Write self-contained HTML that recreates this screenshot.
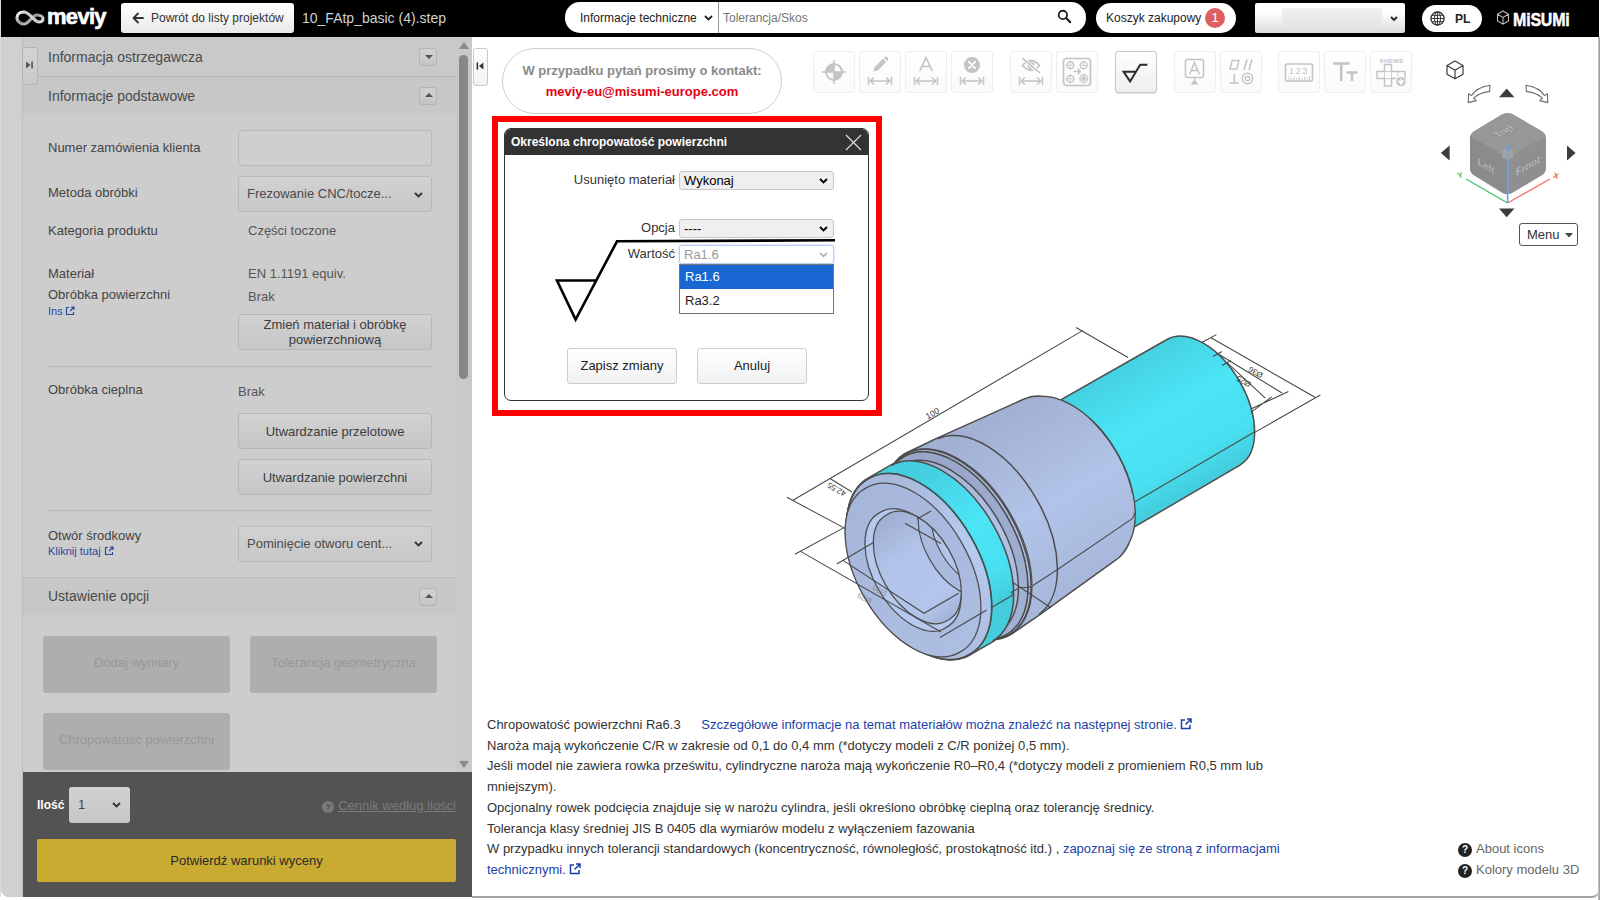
<!DOCTYPE html>
<html lang="pl">
<head>
<meta charset="utf-8">
<title>meviy</title>
<style>
*{box-sizing:border-box;margin:0;padding:0}
html,body{width:1600px;height:900px;overflow:hidden;background:#fff}
body{font-family:"Liberation Sans",Arial,sans-serif;font-size:13px;color:#333;position:relative}
.abs{position:absolute}
#hdr{position:absolute;left:1px;top:0;width:1598px;height:37px;background:#000}
.hbtn{position:absolute;top:3px;height:30px;background:linear-gradient(#fff,#e9e9e9);border-radius:3px;color:#333;font-size:12px;line-height:30px;white-space:nowrap}
.pill{position:absolute;top:3px;height:30px;background:#fff;border-radius:15px;color:#222;font-size:12px;line-height:30px;white-space:nowrap}
/* left panel */
#left{position:absolute;left:1px;top:37px;width:471px;height:860px;background:#cdcdcd;overflow:hidden;border-bottom-left-radius:8px}
#left .strip{position:absolute;left:0;top:0;width:22px;height:860px;background:#d0d0d0;border-right:1px solid #bdbdbd}
.sec{position:absolute;left:22px;width:433px;height:39px;background:#c7c7c7;font-size:14px;color:#4a4a4a;line-height:39px;padding-left:25px}
.sqb{position:absolute;width:18px;height:18px;margin-left:-1px;border:1px solid #b3b3b3;border-radius:3px;background:linear-gradient(#d2d2d2,#c4c4c4)}
.sqb i{position:absolute;left:4.5px;top:6px;width:0;height:0;border-left:4px solid transparent;border-right:4px solid transparent}
.sqb i.dn{border-top:4px solid #555}
.sqb i.up{border-bottom:4px solid #555;top:5px}
.lbl{position:absolute;left:47px;font-size:13px;color:#444;white-space:nowrap;line-height:15px}
.val{position:absolute;font-size:13px;color:#555;white-space:nowrap;line-height:15px}
.lnk{position:absolute;left:47px;font-size:11px;color:#2b4a9b;white-space:nowrap;line-height:12px}
.inp{position:absolute;left:237px;width:194px;height:36px;border:1px solid #b9b9b9;border-radius:3px;background:#cfcfcf}
.selL{position:absolute;left:237px;width:194px;height:36px;border:1px solid #b9b9b9;border-radius:3px;background:linear-gradient(#d1d1d1,#c8c8c8);font-size:13px;color:#4a4a4a;line-height:34px;padding-left:8px;white-space:nowrap}
.btnL{position:absolute;left:237px;width:194px;border:1px solid #b7b7b7;border-radius:3px;background:linear-gradient(#d2d2d2,#c6c6c6);font-size:13px;color:#3c3c3c;text-align:center;white-space:nowrap}
.hr{position:absolute;left:47px;width:384px;height:1px;background:#b8b8b8}
.chev{position:absolute;width:9px;height:6px}
.dis{position:absolute;height:57px;width:187px;background:#aeaeae;border-radius:3px;color:#989898;font-size:13px;text-align:center;line-height:54px;white-space:nowrap}
/* toolbar */
.tb{position:absolute;top:51px;width:42px;height:42px;border:1px solid #eee;border-radius:3px;background:linear-gradient(#fff,#fafafa)}
.tb.act{border-color:#c8c8c8;background:linear-gradient(#fff,#eee);box-shadow:0 1px 1px rgba(0,0,0,.12)}
.tb svg{position:absolute;left:-1px;top:-1px}
/* dialog */
#dlgwrap{position:absolute;left:492px;top:116px;width:390px;height:300px;border:6px solid #fe0000}
#dlg{position:absolute;left:504px;top:128px;width:365px;height:273px;border:1px solid #333;border-radius:7px;background:#fff;overflow:hidden}
#dlg .tt{position:absolute;left:0;top:0;width:100%;height:26px;background:#333;color:#fff;font-weight:bold;font-size:12px;line-height:26px;padding-left:6px}
.dl{position:absolute;font-size:13px;color:#333;white-space:nowrap;text-align:right;line-height:16px}
.dsel{position:absolute;left:174px;width:155px;height:19px;border:1px solid #c6c6c6;border-radius:3px;background:#efefef;font-size:13px;color:#000;line-height:17px;padding-left:4px;white-space:nowrap}
.dbtn{position:absolute;top:219px;width:110px;height:36px;border:1px solid #ccc;border-radius:3px;background:linear-gradient(#fff,#f1f1f1);font-size:13px;color:#222;text-align:center;line-height:33px}
.q{display:inline-block;width:14px;height:14px;border-radius:7px;background:#222;color:#fff;font-size:10px;font-weight:bold;line-height:14px;text-align:center;margin-right:4px;vertical-align:0}
/* notes */
#notes{position:absolute;left:487px;top:715px;width:840px;font-size:13px;line-height:20.7px;color:#333}
#notes a{color:#1b3fa8;text-decoration:none}
</style>
</head>
<body>
<!-- HEADER -->
<div id="hdr">
  <svg class="abs" style="left:14px;top:9px" width="32" height="18" viewBox="0 0 32 18">
    <defs><linearGradient id="lg1" x1="0" y1="0" x2="1" y2="1"><stop offset="0" stop-color="#fff"/><stop offset=".5" stop-color="#9a9a9a"/><stop offset="1" stop-color="#eee"/></linearGradient></defs>
    <path d="M9 3 C4 3 2 6 2 9 C2 12 5 15 9 15 C14 15 17 6 22 6 C26 6 28 8 28 10 C28 12 26 13 24 13 C22 13 21 12 20 11" fill="none" stroke="url(#lg1)" stroke-width="3.2" stroke-linecap="round"/>
    <path d="M9 3 C13 3 15 7 20 11" fill="none" stroke="#cfcfcf" stroke-width="3" stroke-linecap="round"/>
  </svg>
  <div class="abs" style="left:46px;top:3px;color:#fff;font-weight:bold;font-size:22px;line-height:28px;letter-spacing:-.7px;-webkit-text-stroke:.6px #fff">meviy</div>
  <div class="hbtn" style="left:120px;width:173px;padding-left:30px">Powrót do listy projektów
    <svg class="abs" style="left:11px;top:9px" width="12" height="12" viewBox="0 0 12 12"><path d="M11 6H2M6 1.5L1.5 6L6 10.5" fill="none" stroke="#333" stroke-width="1.8" stroke-linecap="round" stroke-linejoin="round"/></svg>
  </div>
  <div class="abs" style="left:301px;top:10px;color:#d0d0d0;font-size:14px;line-height:16px;white-space:nowrap">10_FAtp_basic (4).step</div>
  <!-- search -->
  <div class="pill" style="left:564px;top:2px;height:31px;width:521px;line-height:33px">
    <span class="abs" style="left:15px;top:0">Informacje techniczne</span>
    <svg class="abs" style="left:139px;top:13px" width="9" height="6" viewBox="0 0 9 6"><path d="M1 1l3.5 3.5L8 1" fill="none" stroke="#222" stroke-width="1.8"/></svg>
    <span class="abs" style="left:153px;top:0;width:1px;height:31px;background:#999"></span>
    <span class="abs" style="left:158px;top:0;color:#757575">Tolerancja/Skos</span>
    <svg class="abs" style="left:492px;top:7px" width="14.5" height="14.5" viewBox="0 0 16 16"><circle cx="6.5" cy="6.5" r="4.6" fill="none" stroke="#222" stroke-width="2"/><path d="M10 10l4.5 4.5" stroke="#222" stroke-width="2.4" stroke-linecap="round"/></svg>
  </div>
  <div class="pill" style="left:1095px;width:140px;padding-left:10px">Koszyk zakupowy
    <span class="abs" style="left:109px;top:5px;width:20px;height:20px;border-radius:10px;background:#de5f5f;color:#fff;font-size:13px;line-height:20px;text-align:center">1</span>
  </div>
  <div class="hbtn" style="left:1254px;width:150px;background:linear-gradient(#fff 30%,#dcdcdc);border-radius:2px">
    <span class="abs" style="left:27px;top:5px;width:100px;height:20px;background:linear-gradient(#f0f0f0,#e4e4e4)"></span>
    <svg class="abs" style="left:135px;top:13px" width="8" height="6" viewBox="0 0 8 6"><path d="M1 1l3 3 3-3" fill="none" stroke="#222" stroke-width="1.8"/></svg>
  </div>
  <div class="pill" style="left:1421px;top:5px;height:27px;width:60px;font-weight:bold;padding-left:33px;line-height:28px">PL
    <svg class="abs" style="left:8px;top:6px" width="15" height="15" viewBox="0 0 15 15"><circle cx="7.5" cy="7.5" r="6.6" fill="none" stroke="#222" stroke-width="1.2"/><ellipse cx="7.5" cy="7.5" rx="3" ry="6.6" fill="none" stroke="#222" stroke-width=".9"/><path d="M1 7.5h13M2 4.3h11M2 10.7h11M7.5 1v13" stroke="#222" stroke-width=".9"/></svg>
  </div>
  <svg class="abs" style="left:1495px;top:10px" width="14" height="18" viewBox="0 0 14 18"><path d="M7 1L12.5 4.2V11L7 14.2 1.5 11V4.2Z M1.5 4.2L7 7.4 12.5 4.2 M7 7.4V14.2" fill="none" stroke="#bbb" stroke-width="1.1"/></svg>
  <div class="abs" style="left:1512px;top:8.5px;color:#fff;font-weight:bold;font-size:19px;line-height:22px;letter-spacing:-.2px;transform:scaleX(.84);transform-origin:0 0;-webkit-text-stroke:.5px #fff">MiSUMi</div>
</div>

<!-- LEFT PANEL -->
<div id="left">
  <div class="strip"></div>
  <div class="abs" style="z-index:3;left:21px;top:10px;width:16px;height:38px;border:1px solid #b5b5b5;border-radius:3px;background:linear-gradient(#d3d3d3,#c9c9c9)">
    <svg class="abs" style="left:3px;top:13px" width="8" height="8" viewBox="0 0 8 8"><path d="M0 0.5L4.5 4L0 7.5Z" fill="#555"/><rect x="5.3" y="0.5" width="1.6" height="7" fill="#555"/></svg>
  </div>
  <div class="sec" style="top:0;background:#c9c9c9;line-height:41px">Informacja ostrzegawcza<div class="sqb" style="left:397px;top:11px"><i class="dn"></i></div></div>
  <div class="abs" style="left:36px;top:39px;width:419px;height:1px;background:#b4b4b4"></div>
  <div class="sec" style="top:40px;height:38px;line-height:38px">Informacje podstawowe<div class="sqb" style="left:397px;top:10px"><i class="up"></i></div></div>

  <div class="lbl" style="top:103px">Numer zamówienia klienta</div>
  <div class="inp" style="top:93px"></div>
  <div class="lbl" style="top:148px">Metoda obróbki</div>
  <div class="selL" style="top:139px">Frezowanie CNC/tocze...<svg class="chev" style="left:175px;top:15px" viewBox="0 0 9 6"><path d="M1 1l3.5 3.5L8 1" fill="none" stroke="#333" stroke-width="1.9"/></svg></div>
  <div class="lbl" style="top:186px">Kategoria produktu</div>
  <div class="val" style="left:247px;top:186px">Części toczone</div>
  <div class="lbl" style="top:229px">Materiał</div>
  <div class="val" style="left:247px;top:229px">EN 1.1191 equiv.</div>
  <div class="lbl" style="top:250px">Obróbka powierzchni</div>
  <div class="val" style="left:247px;top:252px">Brak</div>
  <div class="lnk" style="top:268px">Ins<svg style="margin-left:2px;vertical-align:-1px" width="10" height="10" viewBox="0 0 10 10"><path d="M4 1.5H1.5V8.5H8.5V6M5 5L9 1M6 1H9V4" fill="none" stroke="#2b4a9b" stroke-width="1.2"/></svg></div>
  <div class="btnL" style="top:277px;height:36px;line-height:15px;padding-top:2px">Zmień materiał i obróbkę<br>powierzchniową</div>
  <div class="hr" style="top:329px"></div>
  <div class="lbl" style="top:345px">Obróbka cieplna</div>
  <div class="val" style="left:237px;top:347px">Brak</div>
  <div class="btnL" style="top:376px;height:36px;line-height:35px">Utwardzanie przelotowe</div>
  <div class="btnL" style="top:422px;height:36px;line-height:35px">Utwardzanie powierzchni</div>
  <div class="hr" style="top:473px"></div>
  <div class="lbl" style="top:491px">Otwór środkowy</div>
  <div class="lnk" style="top:508px">Kliknij tutaj <svg style="vertical-align:-1px" width="10" height="10" viewBox="0 0 10 10"><path d="M4 1.5H1.5V8.5H8.5V6M5 5L9 1M6 1H9V4" fill="none" stroke="#2b4a9b" stroke-width="1.2"/></svg></div>
  <div class="selL" style="top:489px">Pominięcie otworu cent...<svg class="chev" style="left:175px;top:14px" viewBox="0 0 9 6"><path d="M1 1l3.5 3.5L8 1" fill="none" stroke="#333" stroke-width="1.9"/></svg></div>
  <div class="abs" style="left:22px;top:540px;width:433px;height:1px;background:#bdbdbd"></div>
  <div class="sec" style="top:541px;height:37px;line-height:37px">Ustawienie opcji<div class="sqb" style="left:397px;top:10px"><i class="up"></i></div></div>

  <div class="dis" style="left:42px;top:599px">Dodaj wymiary</div>
  <div class="dis" style="left:249px;top:599px">Tolerancja geometryczna</div>
  <div class="dis" style="left:42px;top:676px">Chropowatość powierzchni</div>

  <!-- scrollbar -->
  <div class="abs" style="left:455px;top:0;width:16px;height:735px;background:#c9c9c9"></div>
  <svg class="abs" style="left:458px;top:5px" width="10" height="7" viewBox="0 0 10 7"><path d="M0 7L5 0L10 7Z" fill="#8a8a8a"/></svg>
  <div class="abs" style="left:458px;top:18px;width:9px;height:324px;border-radius:5px;background:#878787"></div>
  <svg class="abs" style="left:458px;top:724px" width="10" height="7" viewBox="0 0 10 7"><path d="M0 0L5 7L10 0Z" fill="#8a8a8a"/></svg>

  <!-- footer -->
  <div class="abs" style="left:22px;top:735px;width:449px;height:125px;background:#535353">
    <div class="abs" style="left:14px;top:26px;color:#fff;font-size:12px;line-height:14px;font-weight:bold">Ilość</div>
    <div class="abs" style="left:46px;top:15px;width:61px;height:36px;border-radius:3px;background:linear-gradient(#d2d2d2,#c6c6c6);font-size:13px;color:#444;line-height:36px;padding-left:9px">1<svg class="chev" style="left:43px;top:15px" viewBox="0 0 9 6"><path d="M1 1l3.5 3.5L8 1" fill="none" stroke="#333" stroke-width="1.9"/></svg></div>
    <div class="abs" style="right:16px;top:26px;font-size:13px;line-height:15px;color:#7a7a7a;white-space:nowrap"><span style="display:inline-block;width:12px;height:12px;border-radius:6px;background:#7a7a7a;color:#535353;font-size:9px;font-weight:bold;line-height:12px;text-align:center;vertical-align:0;margin-right:4px">?</span><span style="text-decoration:underline">Cennik według ilości</span></div>
    <div class="abs" style="left:14px;top:67px;width:419px;height:43px;border-radius:2px;background:#c9ab31;color:#2a2a2a;font-size:13px;line-height:43px;text-align:center">Potwierdź warunki wyceny</div>
  </div>
</div>

<!-- MAIN -->
<div id="main">
  <div class="abs" style="left:473px;top:48px;width:15px;height:38px;border:1px solid #c9c9c9;border-radius:3px;background:linear-gradient(#fff,#f2f2f2)">
    <svg class="abs" style="left:2px;top:13px" width="8" height="8" viewBox="0 0 8 8"><rect x="0.6" y="0.3" width="1.5" height="7.4" fill="#333"/><path d="M7.4 0.5L3 4L7.4 7.5Z" fill="#333"/></svg>
  </div>
  <div class="abs" style="left:502px;top:48px;width:280px;height:66px;border:1px solid #cfcfcf;border-radius:33px;text-align:center;font-weight:bold;font-size:13px;line-height:20.5px;padding-top:12px;color:#8a8a8a;white-space:nowrap">W przypadku pytań prosimy o kontakt:<br><span style="color:#e60012">meviy-eu@misumi-europe.com</span></div>
<div class="tb " style="left:813px"><svg width="42" height="42" viewBox="0 0 42 42"><circle cx="21" cy="21" r="8" fill="none" stroke="#c4c4c4" stroke-width="2"/><path d="M21 21V13A8 8 0 0 0 13 21Z M21 21V29A8 8 0 0 0 29 21Z" fill="#c4c4c4"/><path d="M9 21H33M21 9V33" stroke="#c4c4c4" stroke-width="1.6"/></svg></div>
<div class="tb " style="left:859px"><svg width="42" height="42" viewBox="0 0 42 42"><path d="M14.5 20.5L15.6 16.2L24 7.8L27.2 11L18.8 19.4Z M25 6.8L26 5.8Q27 5 28 5.9L29.1 7Q29.9 8 29 9L28.2 10Z" fill="#c4c4c4"/><path d="M9.5 26V34M32.5 26V34M11 30H31M15 26.5L11.2 30L15 33.5M27 26.5L30.8 30L27 33.5" fill="none" stroke="#c4c4c4" stroke-width="1.5"/></svg></div>
<div class="tb " style="left:905px"><svg width="42" height="42" viewBox="0 0 42 42"><path d="M14.8 20L21 6.5L27.2 20M17.2 15.5H24.8" fill="none" stroke="#c4c4c4" stroke-width="1.7"/><path d="M9.5 26V34M32.5 26V34M11 30H31M15 26.5L11.2 30L15 33.5M27 26.5L30.8 30L27 33.5" fill="none" stroke="#c4c4c4" stroke-width="1.5"/></svg></div>
<div class="tb " style="left:951px"><svg width="42" height="42" viewBox="0 0 42 42"><circle cx="21" cy="14" r="8" fill="#c4c4c4"/><path d="M17.8 10.8L24.2 17.2M24.2 10.8L17.8 17.2" stroke="#fff" stroke-width="1.8" stroke-linecap="round"/><path d="M9.5 26V34M32.5 26V34M11 30H31M15 26.5L11.2 30L15 33.5M27 26.5L30.8 30L27 33.5" fill="none" stroke="#c4c4c4" stroke-width="1.5"/></svg></div>
<div class="tb " style="left:1010px"><svg width="42" height="42" viewBox="0 0 42 42"><path d="M12.5 14.5Q21 5 29.5 14.5Q21 24 12.5 14.5Z" fill="none" stroke="#c4c4c4" stroke-width="1.8"/><circle cx="21" cy="14.5" r="3.6" fill="#c4c4c4"/><path d="M12 7L30 22" stroke="#fff" stroke-width="3.4"/><path d="M12.2 7.2L29.8 21.8" stroke="#c4c4c4" stroke-width="1.6"/><path d="M9.5 26V34M32.5 26V34M11 30H31M15 26.5L11.2 30L15 33.5M27 26.5L30.8 30L27 33.5" fill="none" stroke="#c4c4c4" stroke-width="1.5"/></svg></div>
<div class="tb " style="left:1056px"><svg width="42" height="42" viewBox="0 0 42 42"><rect x="7.5" y="7.5" width="27" height="27" rx="3" fill="none" stroke="#c4c4c4" stroke-width="1.7"/><g fill="none" stroke="#c4c4c4" stroke-width="1.2"><circle cx="14.3" cy="14.3" r="3.4"/><circle cx="27.7" cy="14.3" r="3.4"/><circle cx="14.3" cy="27.7" r="3.4"/><circle cx="27.7" cy="27.7" r="3.8"/><circle cx="27.7" cy="27.7" r="1.6"/><path d="M9.6 14.3H19M14.3 9.6V19M23 14.3H32.4M27.7 9.6V19M9.6 27.7H19M14.3 23V32.4M22.6 27.7H32.8M27.7 22.6V32.8" stroke-width=".7"/></g><path d="M17.5 20.5H24M21.6 17.8L24.3 20.5L21.6 23.2" fill="none" stroke="#c4c4c4" stroke-width="1.5"/></svg></div>
<div class="tb act" style="left:1115px"><svg width="42" height="42" viewBox="0 0 42 42"><path d="M20.6 20.7H8.6L15.1 30.4L25.2 13.8H32.4" fill="none" stroke="#2b2b2b" stroke-width="2" stroke-linejoin="miter"/></svg></div>
<div class="tb " style="left:1174px"><svg width="42" height="42" viewBox="0 0 42 42"><rect x="11.5" y="8.5" width="18" height="18" rx="2" fill="none" stroke="#c4c4c4" stroke-width="1.5"/><path d="M15.5 23.5L20.5 11.5L25.5 23.5M17.3 19.5H23.7" fill="none" stroke="#c4c4c4" stroke-width="1.5"/><path d="M20.5 26.5V29" stroke="#c4c4c4" stroke-width="1.4"/><path d="M16.5 33.5L20.5 28.5L24.5 33.5Z" fill="#c4c4c4"/></svg></div>
<div class="tb " style="left:1220px"><svg width="42" height="42" viewBox="0 0 42 42"><path d="M12.2 9.5H19L16.8 18H10Z" fill="none" stroke="#c4c4c4" stroke-width="1.5"/><path d="M27 8.5L24 19M32 8.5L29 19" stroke="#c4c4c4" stroke-width="1.6"/><path d="M9.5 32H19M14.3 32V23" stroke="#c4c4c4" stroke-width="1.6"/><circle cx="27.5" cy="27.5" r="5.2" fill="none" stroke="#c4c4c4" stroke-width="1.4"/><circle cx="27.5" cy="27.5" r="2.2" fill="none" stroke="#c4c4c4" stroke-width="1.3"/></svg></div>
<div class="tb " style="left:1278px"><svg width="42" height="42" viewBox="0 0 42 42"><rect x="7.5" y="13" width="27" height="17" rx="1.5" fill="none" stroke="#c4c4c4" stroke-width="1.6"/><path d="M11 29V25.5M13.6 29V27M16.2 29V25.5M18.8 29V27M21.4 29V25.5M24 29V27M26.6 29V25.5M29.2 29V27M31.5 29V25.5" stroke="#c4c4c4" stroke-width=".9"/><text x="21" y="23.3" font-family="Liberation Sans" font-size="9" text-anchor="middle" fill="#c4c4c4" letter-spacing="1.6">123</text></svg></div>
<div class="tb " style="left:1324px"><svg width="42" height="42" viewBox="0 0 42 42"><path d="M9 12.5H25.5M17.2 12.5V30" stroke="#c4c4c4" stroke-width="2.6" fill="none"/><path d="M22.5 21.5H33.5M28 21.5V30" stroke="#c4c4c4" stroke-width="2.4" fill="none"/></svg></div>
<div class="tb " style="left:1370px"><svg width="42" height="42" viewBox="0 0 42 42"><text x="21.5" y="11.6" font-family="Liberation Sans" font-size="6.2" font-weight="bold" text-anchor="middle" fill="#c4c4c4">6VIEWS</text><path d="M14.5 13.5H21.5V20.5H35V27.5H21.5V35H14.5V27.5H7V20.5H14.5Z" fill="none" stroke="#c4c4c4" stroke-width="1.5"/><path d="M14.5 20.5H21.5V27.5H14.5ZM28 20.5V27.5" fill="none" stroke="#c4c4c4" stroke-width=".8"/><circle cx="31" cy="30.5" r="5.2" fill="#c4c4c4" stroke="#fff" stroke-width="1"/><path d="M31 27.3V30M28.6 30H33.4L31 33.3Z" fill="#fff" stroke="#fff" stroke-width="1.2"/></svg></div>

  <div id="dlgwrap"></div>
  <div id="dlg">
    <div class="tt">Określona chropowatość powierzchni</div>
    <svg class="abs" style="left:340px;top:5px" width="17" height="17" viewBox="0 0 17 17"><path d="M1 1L16 16M16 1L1 16" stroke="#e0e0e0" stroke-width="1.1"/></svg>
    <div class="dl" style="right:193px;top:43px">Usunięto materiał</div>
    <div class="dsel" style="top:42px">Wykonaj<svg class="chev" style="left:139px;top:6px" viewBox="0 0 9 6"><path d="M1 1l3.5 3.5L8 1" fill="none" stroke="#000" stroke-width="1.9"/></svg></div>
    <div class="dl" style="right:193px;top:91px">Opcja</div>
    <div class="dsel" style="top:90px">----<svg class="chev" style="left:139px;top:6px" viewBox="0 0 9 6"><path d="M1 1l3.5 3.5L8 1" fill="none" stroke="#000" stroke-width="1.9"/></svg></div>
    <svg class="abs" style="left:40px;top:100px" width="300" height="100" viewBox="544 228 300 100"><path d="M834 239.3L616 240.3L574.6 318.5L556 279.5H595.5" fill="none" stroke="#000" stroke-width="2.6" stroke-linejoin="miter"/></svg>
    <div class="dl" style="right:193px;top:117px">Wartość</div>
    <div class="dsel" style="top:116px;background:#fff;border-color:#b9cdf3;color:#999;box-shadow:0 0 0 1px #e4ecfb">Ra1.6<svg class="chev" style="left:139px;top:6px" viewBox="0 0 9 6"><path d="M1 1l3.5 3.5L8 1" fill="none" stroke="#aaa" stroke-width="1.5"/></svg></div>
    <div class="abs" style="left:174px;top:135px;width:155px;height:50px;border:1px solid #767676;background:#fff;font-size:13px;line-height:24px">
      <div style="height:24px;background:#1967d2;color:#fff;padding-left:5px">Ra1.6</div>
      <div style="height:24px;color:#222;padding-left:5px">Ra3.2</div>
    </div>
    <div class="dbtn" style="left:62px">Zapisz zmiany</div>
    <div class="dbtn" style="left:192px">Anuluj</div>
  </div>

  <div id="notes">Chropowatość powierzchni Ra6.3 <a style="margin-left:17px">Szczegółowe informacje na temat materiałów można znaleźć na następnej stronie. <svg style="vertical-align:-1px" width="12" height="12" viewBox="0 0 12 12"><path d="M5 2H1.5V10.5H10V7M5.5 6.5L11 1M7 1H11V5" fill="none" stroke="#1b3fa8" stroke-width="1.5"/></svg></a><br>Naroża mają wykończenie C/R w zakresie od 0,1 do 0,4 mm (*dotyczy modeli z C/R poniżej 0,5 mm).<br>Jeśli model nie zawiera rowka prześwitu, cylindryczne naroża mają wykończenie R0–R0,4 (*dotyczy modeli z promieniem R0,5 mm lub<br>mniejszym).<br>Opcjonalny rowek podcięcia znajduje się w narożu cylindra, jeśli określono obróbkę cieplną oraz tolerancję średnicy.<br>Tolerancja klasy średniej JIS B 0405 dla wymiarów modelu z wyłączeniem fazowania<br>W przypadku innych tolerancji standardowych (koncentryczność, równoległość, prostokątność itd.) , <a>zapoznaj się ze stroną z informacjami<br>technicznymi. <svg style="vertical-align:-1px" width="12" height="12" viewBox="0 0 12 12"><path d="M5 2H1.5V10.5H10V7M5.5 6.5L11 1M7 1H11V5" fill="none" stroke="#1b3fa8" stroke-width="1.5"/></svg></a></div>

  <div class="abs" style="left:1458px;top:841px;font-size:13px;line-height:15px;color:#666;white-space:nowrap"><span class="q">?</span>About icons</div>
  <div class="abs" style="left:1458px;top:862px;font-size:13px;line-height:15px;color:#666;white-space:nowrap"><span class="q">?</span>Kolory modelu 3D</div>

  <!-- VIEWCUBE -->
  <svg class="abs" style="left:1430px;top:50px" width="160" height="175" viewBox="1430 50 160 175">
    <g fill="none" stroke="#3d3d3d" stroke-width="1.2" stroke-linejoin="round"><path d="M1455 61L1463 65.6V74.2L1455 78.8L1447 74.2V65.6ZM1447 65.6L1455 70.2L1463 65.6M1455 70.2V78.8"/></g>
    <g fill="#fff" stroke="#6a6a6a" stroke-width="1.1" stroke-linejoin="round">
      <path d="M1490 85.2Q1476 87.5 1471.6 95.6L1468.6 93.8L1468.2 102.6L1476.2 100.6L1473.6 98.2Q1479 92.5 1489.6 91.6Z"/>
      <path d="M1526 85.2Q1540 87.5 1544.4 95.6L1547.4 93.8L1547.8 102.6L1539.8 100.6L1542.4 98.2Q1537 92.5 1526.4 91.6Z"/>
    </g>
    <g fill="#3d3d3d"><path d="M1499 97.2H1514.4L1506.7 88.4Z"/><path d="M1499 208.6H1514.4L1506.7 217.2Z"/><path d="M1449.6 145.4V160.6L1440.8 153Z"/><path d="M1567 145.4V160.6L1575.6 153Z"/></g>
    <path d="M1507.5 113.2Q1510.5 113.2 1513 114.6L1541.5 131Q1546 133.6 1546 138.6V168Q1546 173 1541.5 175.6L1513 192.6Q1507.5 195.8 1502 192.6L1474.5 175.6Q1470 173 1470 168V138.6Q1470 133.6 1474.5 131L1502 114.6Q1504.5 113.2 1507.5 113.2Z" fill="#8f8f8f"/>
    <path d="M1507.5 113.2Q1510.5 113.2 1513 114.6L1541.5 131Q1545 133 1545.8 136L1512 155.5L1503.5 155.5L1470.2 136Q1471 133 1474.5 131L1502 114.6Q1504.5 113.2 1507.5 113.2Z" fill="#979797"/>
    <path d="M1503.5 155.5L1470.2 136Q1470 137 1470 138.6V168Q1470 173 1474.5 175.6L1502 192.6Q1504.5 194 1507.5 194.4V162Z" fill="#8b8b8b"/>
    <path d="M1507.8 147.6L1513.4 150.8V157.4L1507.8 160.6L1502.2 157.4V150.8Z" fill="#a2a2a2"/>
    <g font-family="Liberation Sans, sans-serif" font-weight="bold" font-size="10.5" fill="#c9c9c9" stroke="#7a7a7a" stroke-width=".35" text-anchor="middle">
      <text transform="matrix(.9 -.52 .9 .52 1506.5 133)">Top</text>
      <text transform="matrix(.866 .5 0 1 1486 169.5)">Left</text>
      <text transform="matrix(.866 -.5 0 1 1528 169.5)" font-size="11">Front</text>
    </g>
    <path d="M1507.6 203L1466 179" stroke="#3fc463" stroke-width="1.3"/>
    <path d="M1507.6 203L1550 179" stroke="#f46b6b" stroke-width="1.3"/>
    <path d="M1507.6 203V154" stroke="#5ca8f4" stroke-width="1.6"/>
    <g font-family="Liberation Sans, sans-serif" font-weight="bold" font-size="8" text-anchor="middle">
      <text x="1460" y="178" fill="#3fc463" transform="rotate(-15 1460 175)">Y</text>
      <text x="1556" y="178.5" fill="#f25c5c" transform="rotate(15 1556 175.5)">X</text>
      <text x="1508" y="151" fill="#4d9ff2" font-style="italic">Z</text>
    </g>
  </svg>
  <div class="abs" style="left:1519px;top:223px;width:59px;height:23px;border:1px solid #555;border-radius:3px;background:#fff;font-size:13px;color:#333;line-height:21px;padding-left:7px">Menu<svg class="abs" style="left:45px;top:9px" width="8" height="5" viewBox="0 0 8 5"><path d="M0 0H8L4 4.5Z" fill="#444"/></svg></div>

  <!-- MODEL -->
  <svg id="model" class="abs" style="left:760px;top:300px" width="600" height="380" viewBox="760 300 600 380">
<defs>
<linearGradient id="gb" gradientUnits="userSpaceOnUse" x1="960" y1="440" x2="1060" y2="613"><stop offset="0" stop-color="#a2b1d3"/><stop offset=".5" stop-color="#b1c3e8"/><stop offset="1" stop-color="#a6b6da"/></linearGradient>
<linearGradient id="gc" gradientUnits="userSpaceOnUse" x1="1100" y1="370" x2="1175" y2="500"><stop offset="0" stop-color="#44cfe0"/><stop offset=".45" stop-color="#4be5f6"/><stop offset=".8" stop-color="#49e0f1"/><stop offset="1" stop-color="#43cddd"/></linearGradient>
<linearGradient id="gd" gradientUnits="userSpaceOnUse" x1="960" y1="440" x2="1060" y2="613"><stop offset="0" stop-color="#98a7c8"/><stop offset="1" stop-color="#a2b2d6"/></linearGradient>
<linearGradient id="gf" gradientUnits="userSpaceOnUse" x1="960" y1="440" x2="1060" y2="613"><stop offset="0" stop-color="#a9b9dc"/><stop offset=".5" stop-color="#b9caef"/><stop offset="1" stop-color="#adbde1"/></linearGradient>
<linearGradient id="gface" gradientUnits="userSpaceOnUse" x1="860" y1="490" x2="960" y2="650"><stop offset="0" stop-color="#a6b6da"/><stop offset="1" stop-color="#adbee3"/></linearGradient>
<linearGradient id="gh" gradientUnits="userSpaceOnUse" x1="880" y1="520" x2="950" y2="620"><stop offset="0" stop-color="#9fafd2"/><stop offset=".35" stop-color="#b1c3e8"/><stop offset=".8" stop-color="#b3c5ea"/><stop offset="1" stop-color="#a3b3d7"/></linearGradient>
</defs>
<g stroke="#4d4d4d" stroke-width="1.5" stroke-linejoin="round" fill="none">
<path d="M1239.6 465.3A72.6 41.9 60 0 0 1167 339.5L1036.1 413.9A73.6 42.5 60 1 0 1109.7 541.4Z" fill="url(#gc)"/>
<path d="M1254.4 432.1L1124.8 507.8" stroke-width="1.15"/>
<path d="M1116.2 552A86 49.6 60 1 0 1030.2 403A86 49.6 60 1 0 1116.2 552ZM1131.9 493.3A86 49.6 60 0 0 1088.9 418.7L1087.7 417.7A89 51.4 60 1 0 1132.3 494.9ZM1128.6 541.9A89 51.4 60 0 0 1045.1 397.3L1039.9 397.1A92 53.1 60 1 0 1126.2 546.6ZM1115.8 559A92 53.1 60 0 0 1023.9 399.9L938 438.5A101.5 58.6 60 1 0 1039.4 614ZM1038.7 614.5A101.5 58.6 60 0 0 937.3 438.9L908 452.9A104 60 60 1 0 1011.9 632.9ZM990 639.2A104 60 60 1 0 891.6 468.7L890.3 471A102.6 59.2 60 0 0 987.4 639.2ZM959.2 631.3A102.6 59.2 60 1 0 883 499.3L882.8 504.4A96.8 55.9 60 0 0 954.7 629ZM999.5 631.8A96.8 55.9 60 0 0 902.7 464.2L894.5 468.9A96.8 55.9 60 0 0 991.3 636.6ZM992.7 641A101.3 58.5 60 1 0 891.4 465.5A101.3 58.5 60 1 0 992.7 641ZM992.7 641A101.3 58.5 60 0 0 891.4 465.5L868.4 478.8A101.3 58.5 60 0 0 969.7 654.2ZM933.3 655.8A101.3 58.5 60 1 0 848.9 509.5L847.5 516.8A94.6 54.6 60 0 0 926.3 653.4Z" stroke-width="3.0"/>
<path d="M1116.2 552A86 49.6 60 1 0 1030.2 403A86 49.6 60 1 0 1116.2 552Z" fill="url(#gb)" stroke="none"/>
<path d="M1131.9 493.3A86 49.6 60 0 0 1088.9 418.7L1087.7 417.7A89 51.4 60 1 0 1132.3 494.9Z" fill="url(#gb)" stroke="none"/>
<path d="M1131.9 493.3A86 49.6 60 0 0 1088.9 418.7"/>
<path d="M1128.6 541.9A89 51.4 60 0 0 1045.1 397.3L1039.9 397.1A92 53.1 60 1 0 1126.2 546.6Z" fill="url(#gb)" stroke="none"/>
<path d="M1115.8 559A92 53.1 60 0 0 1023.9 399.9L938 438.5A101.5 58.6 60 1 0 1039.4 614Z" fill="url(#gb)" stroke="none"/>
<path d="M1038.7 614.5A101.5 58.6 60 0 0 937.3 438.9L908 452.9A104 60 60 1 0 1011.9 632.9Z" fill="url(#gb)" stroke="none"/>
<path d="M1038.7 614.5A101.5 58.6 60 0 0 937.3 438.9"/>
<path d="M1009.6 634.3A104 60 60 1 0 905.6 454.2A104 60 60 1 0 1009.6 634.3Z" stroke-width="1.25"/>
<path d="M990 639.2A104 60 60 1 0 891.6 468.7L890.3 471A102.6 59.2 60 0 0 987.4 639.2Z" fill="url(#gb)" stroke="none"/>
<path d="M990 639.2A104 60 60 1 0 891.6 468.7"/>
<path d="M1006.7 634.4A102.6 59.2 60 1 0 904.1 456.6A102.6 59.2 60 1 0 1006.7 634.4Z" stroke-width="1.25"/>
<path d="M959.2 631.3A102.6 59.2 60 1 0 883 499.3L882.8 504.4A96.8 55.9 60 0 0 954.7 629Z" fill="url(#gd)" stroke="none"/>
<path d="M1006.7 634.4A102.6 59.2 60 1 0 904.1 456.6A102.6 59.2 60 1 0 1006.7 634.4Z"/>
<path d="M999.5 631.8A96.8 55.9 60 0 0 902.7 464.2L894.5 468.9A96.8 55.9 60 0 0 991.3 636.6Z" fill="url(#gb)" stroke="none"/>
<path d="M999.5 631.8A96.8 55.9 60 0 0 902.7 464.2"/>
<path d="M992.7 641A101.3 58.5 60 1 0 891.4 465.5A101.3 58.5 60 1 0 992.7 641Z" fill="url(#gb)" stroke="none"/>
<path d="M992.7 641A101.3 58.5 60 0 0 891.4 465.5L868.4 478.8A101.3 58.5 60 0 0 969.7 654.2Z" fill="url(#gc)" stroke="none"/>
<path d="M992.7 641A101.3 58.5 60 0 0 891.4 465.5"/>
<path d="M969.7 654.2A101.3 58.5 60 1 0 868.4 478.8A101.3 58.5 60 1 0 969.7 654.2Z" stroke-width="1.25"/>
<path d="M933.3 655.8A101.3 58.5 60 1 0 848.9 509.5L847.5 516.8A94.6 54.6 60 0 0 926.3 653.4Z" fill="url(#gf)" stroke="none"/>
<path d="M969.7 654.2A101.3 58.5 60 1 0 868.4 478.8A101.3 58.5 60 1 0 969.7 654.2Z"/>
</g>
<path d="M960.3 651.9A94.6 54.6 60 1 0 865.7 488.1A94.6 54.6 60 1 0 960.3 651.9Z" fill="url(#gface)" stroke="#4d4d4d" stroke-width="1.25"/>
<path d="M946.1 627.4A66.3 38.3 60 1 0 879.9 512.6A66.3 38.3 60 1 0 946.1 627.4Z" fill="#b6c8ee" stroke="#4d4d4d" stroke-width="1.25"/>
<clipPath id="hc"><path d="M947.8 620.3A61 35.2 60 1 0 886.8 514.7A61 35.2 60 1 0 947.8 620.3Z"/></clipPath>
<path d="M947.8 620.3A61 35.2 60 1 0 886.8 514.7A61 35.2 60 1 0 947.8 620.3Z" fill="url(#gh)"/>
<g clip-path="url(#hc)">
<path d="M987.6 593.3A57.5 33.2 60 1 0 930.1 493.7A57.5 33.2 60 1 0 987.6 593.3Z" fill="#aabade" stroke="#4d4d4d" stroke-width="1.15"/>
<path d="M991.7 582.3A50 28.8 60 1 0 941.7 495.7A50 28.8 60 1 0 991.7 582.3Z" fill="#b4c6eb" stroke="#4d4d4d" stroke-width="1.15"/>
<path d="M1033.3 558.3A50 28.8 60 1 0 983.3 471.7A50 28.8 60 1 0 1033.3 558.3Z" fill="#a9b9dc" stroke="#4d4d4d" stroke-width="1.05"/>
</g>
<path d="M947.8 620.3A61 35.2 60 1 0 886.8 514.7A61 35.2 60 1 0 947.8 620.3Z" fill="none" stroke="#4d4d4d" stroke-width="1.25"/>
<path d="M1134 512.6L1134.4 514.8L1132.2 518.6L1057.5 569.5L1031.1 586.7L1028 587.4L1019.5 587.5L1011.3 592.3L1013.6 594.6L990.7 607.9" fill="none" stroke="#4d4d4d" stroke-width="1.1" />
<g fill="none" stroke="#484848" stroke-width="1.05">
<path d="M786.9 497.3L845 528.4M793 500.2L1083 330.4M1076 327.5L1128 357.5M830.4 478.7L852 492"/>
<path d="M794.9 554.2L844 527.6M801 551.6L941 632M836.7 564L873 542.7M843 560.4L924 613.3L958.7 593.3M986.7 610L940 637.5"/>
<path d="M1012 582L1051 607.8M905 523.3L941 543.5M917 519L931 511"/>
<path d="M1202.2 342.2L1216.4 334.6M1211 337.8L1315 397.3M1253.8 432.9L1320.4 395M1218 353.8L1282 393M1251 409L1288.4 391.5M1227 362.7L1265.3 398.2M1251 412.4L1271.6 396.8M1213 356.5L1222 351.5M1222 365.5L1231 360.5"/>
</g>
<g font-family="Liberation Sans, sans-serif" font-size="8.5" fill="#3a3a3a" text-anchor="middle">
<text transform="translate(934 416) rotate(-30)">100</text>
<text transform="translate(838 487) rotate(210)" font-size="8">42.55</text>
<text transform="translate(1257 370) rotate(210)" font-size="8">Ø36</text>
<text transform="translate(1245 379) rotate(210)" font-size="8">Ø25</text>
<text transform="translate(881 588) rotate(210)" font-size="8" fill="#777" opacity=".7">Ø30</text>
<text transform="translate(866 596) rotate(210)" font-size="8" fill="#777" opacity=".7">Ø29</text>
</g>

  </svg>
</div>

<!-- window chrome edges -->
<div class="abs" style="left:0;top:0;width:1px;height:897px;background:#d9d9d9"></div>
<div class="abs" style="left:1598px;top:37px;width:2px;height:863px;background:linear-gradient(90deg,#c4c4c4,#9a9a9a)"></div>
<div class="abs" style="left:472px;top:37px;width:1127px;height:861px;border-bottom:2px solid #a3a3a3;border-right:1px solid #bdbdbd;border-bottom-right-radius:7px;background:transparent;pointer-events:none"></div>
</body>
</html>
